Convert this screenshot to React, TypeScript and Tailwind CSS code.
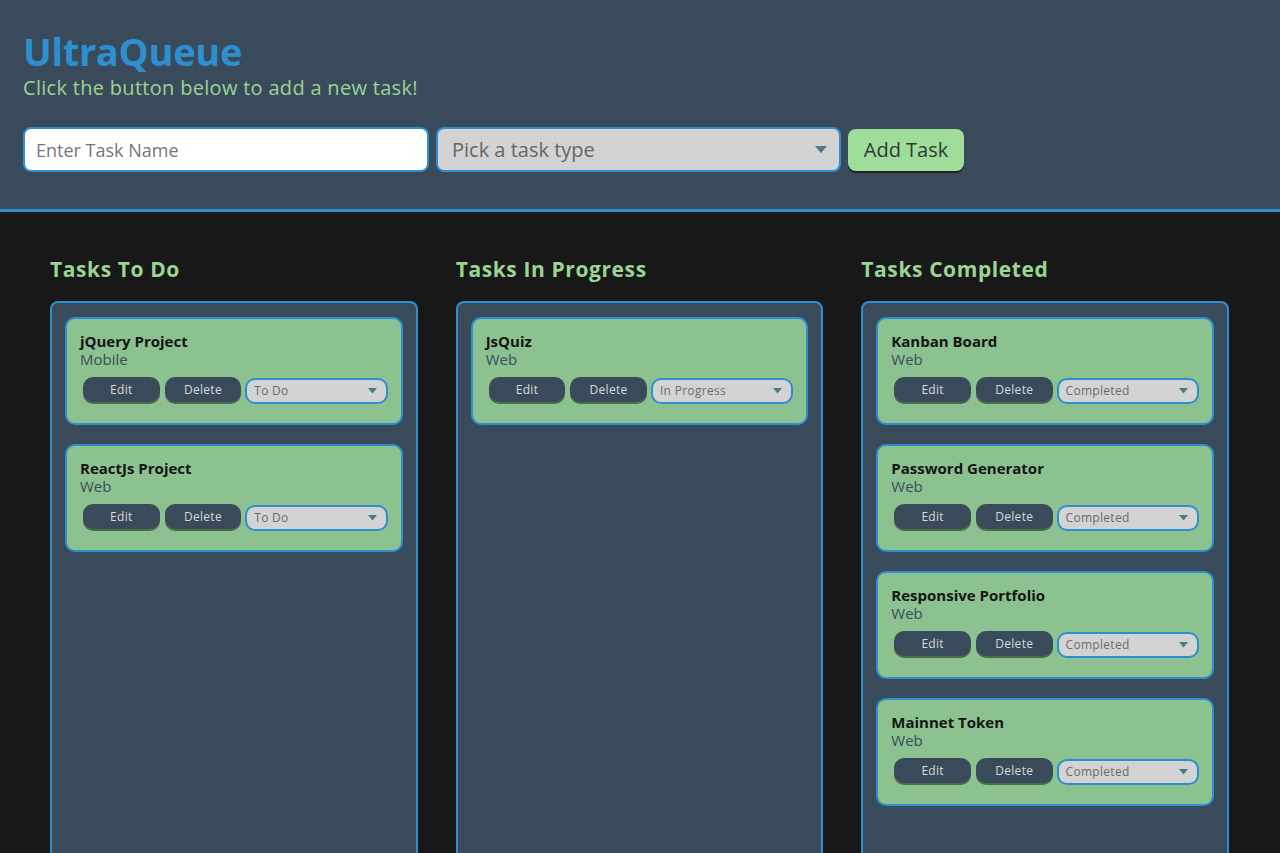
const columns = [
  {
    title: "Tasks To Do",
    tasks: [
      { name: "jQuery Project", type: "Mobile", status: "To Do" },
      { name: "ReactJs Project", type: "Web", status: "To Do" },
    ],
  },
  {
    title: "Tasks In Progress",
    tasks: [{ name: "JsQuiz", type: "Web", status: "In Progress" }],
  },
  {
    title: "Tasks Completed",
    tasks: [
      { name: "Kanban Board", type: "Web", status: "Completed" },
      { name: "Password Generator", type: "Web", status: "Completed" },
      { name: "Responsive Portfolio", type: "Web", status: "Completed" },
      { name: "Mainnet Token", type: "Web", status: "Completed" },
    ],
  },
];

const Caret = ({ size = 10 }: { size?: number }) => (
  <svg width={size} height={size * 0.6} viewBox="0 0 10 6">
    <path d="M0 0 L10 0 L5 6 Z" fill="#4a7c88" />
  </svg>
);

const TaskCard = ({ name, type, status }: { name: string; type: string; status: string }) => {
  return (
    <div className="bg-[#8bc28f] border-2 border-[#2d8fcf] rounded-[10px] pl-[13px] pr-[13px] pt-[13px] pb-[19px]">
      <h3 className="text-[15px] font-bold text-[#151515] leading-[18px]">{name}</h3>
      <p className="text-[15px] text-[#3b4d5c] leading-[18px]">{type}</p>
      {/* actions */}
      <div className="flex items-start mt-[9px] pl-[3px] gap-[5px]">
        <button className="w-[77px] h-[25px] rounded-[10px] bg-[#394b5b] text-[#d9d9d9] text-[12px] tracking-wide shadow-[0_2px_0_#4c6b4f]">
          Edit
        </button>
        <button className="w-[77px] h-[25px] rounded-[10px] bg-[#394b5b] text-[#d9d9d9] text-[12px] tracking-wide shadow-[0_2px_0_#4c6b4f]">
          Delete
        </button>
        <div className="w-[143px] h-[26px] mt-[1px] -ml-[1px] rounded-[10px] bg-[#d3d3d3] border-2 border-[#2d8fcf] flex items-center justify-between pl-[7px] pr-[9px]">
          <span className="text-[12px] text-[#6b6b6b] tracking-wide">{status}</span>
          <Caret size={9} />
        </div>
      </div>
    </div>
  );
};

export default function App() {
  return (
    <div className="min-h-screen bg-[#181818] font-['Open_Sans',sans-serif]">
      {/* Header */}
      <header className="bg-[#394b5b] border-b-[3px] border-[#2d8fcf] px-[23px] pt-[28px] h-[212px]">
        <h1 className="text-[38px] font-bold text-[#2d8fcf] leading-[46px] tracking-[-0.3px]">UltraQueue</h1>
        <p className="text-[20px] text-[#9bd494] leading-[24px] mt-[2px] tracking-[0.3px]">
          Click the button below to add a new task!
        </p>
        <div className="flex items-center mt-[27px] gap-[7px]">
          <input
            type="text"
            placeholder="Enter Task Name"
            className="w-[406px] h-[45px] rounded-[8px] border-2 border-[#2d8fcf] bg-white px-[11px] text-[18px] placeholder:text-[#777] focus:outline-none"
          />
          <div className="w-[405px] h-[45px] rounded-[8px] border-2 border-[#2d8fcf] bg-[#d3d3d3] flex items-center justify-between pl-[14px] pr-[12px]">
            <span className="text-[20px] text-[#666]">Pick a task type</span>
            <Caret size={12} />
          </div>
          <button className="h-[42px] w-[116px] mt-[1px] rounded-[8px] bg-[#a0dc9a] text-[20px] text-[#2f3a33] shadow-[0_2px_0_#222]">
            Add Task
          </button>
        </div>
      </header>

      {/* Board */}
      <main className="grid grid-cols-3 gap-[38px] pl-[50px] pr-[51px] pt-[44px]">
        {columns.map((col) => (
          <section key={col.title}>
            <h2 className="text-[21px] font-bold text-[#9bd494] leading-[26px] tracking-[0.6px]">{col.title}</h2>
            <div className="mt-[19px] h-[600px] bg-[#394b5b] border-2 border-[#2d8fcf] rounded-[8px] px-[13px] pt-[14px] flex flex-col gap-[19px]">
              {col.tasks.map((t) => (
                <TaskCard key={t.name} {...t} />
              ))}
            </div>
          </section>
        ))}
      </main>
    </div>
  );
}
